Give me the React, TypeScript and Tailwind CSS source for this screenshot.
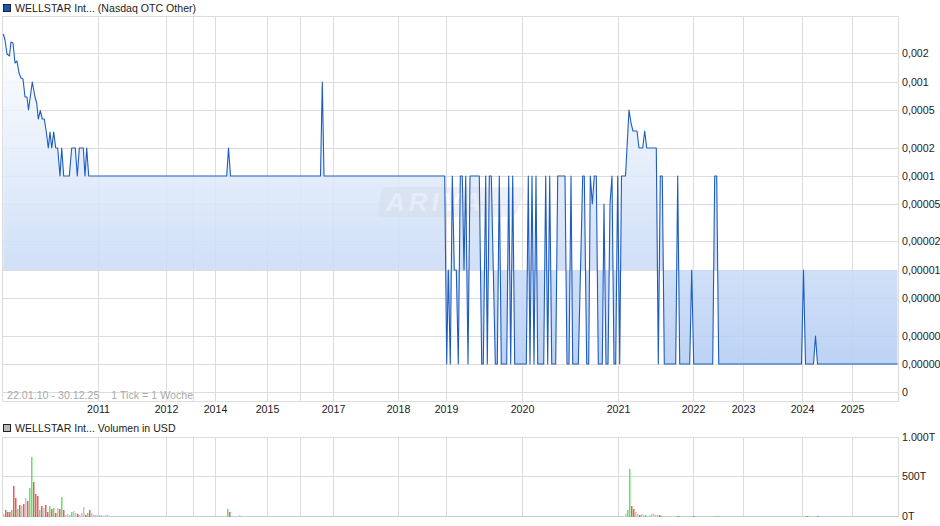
const T = 176;
const M = 270;
const H = 204;
const B = 364;

// price line in page pixels
const points: [number, number][] = [
  [3.3, 34], [5, 40], [7, 54], [9.5, 56], [11, 42], [13, 43], [15, 63], [17, 61], [19, 73], [21, 78], [23, 79],
  [25, 97], [27, 97], [28.5, 110], [32.3, 82], [35, 97], [36.7, 103], [38.3, 119], [40.3, 110.6], [42.3, 119],
  [44.3, 119], [46.3, 132], [48.3, 148], [50, 132], [51.7, 148], [53.7, 132], [55.7, 148], [57.7, 148], [60, T],
  [61.7, 148], [63.7, T], [69.3, T], [71.7, 148], [75.3, 148], [77.3, T], [79.3, 148], [83.3, 148], [85, T],
  [86.7, 148], [88.7, T], [226.7, T], [228.5, 148], [230.5, T], [320.5, T], [322.3, 82], [324, T], [444.7, T],
  [446.7, B], [448.3, M], [450.3, B], [452.3, T], [454.3, M], [456.3, M], [458.3, B], [460.3, T], [462.3, T],
  [464, M], [465.7, T], [468, B], [470, T], [479.3, T], [481.7, B], [483.3, B], [485.7, T], [487.3, B], [489.3, T],
  [491.3, T], [495.3, B], [497.3, B], [499.3, T], [501.3, B], [506.7, B], [508.7, T], [510.7, B], [512.7, T],
  [514.7, B], [526.3, B], [528.3, T], [530, B], [532, T], [534, B], [536, T], [537.7, B], [543.7, B], [545.7, T],
  [547.7, B], [549.7, T], [551.7, B], [555.7, B], [557.7, T], [565, T], [567, B], [569, B], [571, T], [572.7, B],
  [578.3, B], [582.7, T], [584.3, T], [586.7, B], [588.7, B], [590.3, T], [592.3, H], [594.3, T], [596.3, T],
  [598.3, B], [602.3, B], [604, H], [606, B], [608, B], [610, H], [612, T], [614, B], [615.7, B], [617.7, T],
  [619.7, B], [621.5, T], [625.5, T], [629, 110], [631, 123], [633, 131], [637, 131], [639, 148], [642.7, 148],
  [644.7, 131], [646.7, 148], [656.3, 148], [658.3, B], [660.3, T], [662.3, T], [664.3, B], [675.7, B], [677.7, T],
  [679.7, B], [689.7, B], [691.7, M], [693.7, B], [712.7, B], [714.7, T], [716.7, T], [718.7, B], [801.5, B],
  [803.5, M], [805.5, B], [813.5, B], [815.5, 336], [817.5, B], [897.5, B],
];

const line = points.map((p) => p.join(",")).join(" ");
const area = `${line} 897.5,${M} 3.3,${M}`;

const gridX = [98, 166, 193, 215, 267, 300, 333, 398, 446, 522, 618, 693, 743, 802, 852];
const gridY = [53, 82, 110, 148, 176, 204, 241, 270, 298, 336, 364, 392];
const priceLabels = ["0,002", "0,001", "0,0005", "0,0002", "0,0001", "0,00005", "0,00002", "0,00001", "0,00000", "0,00000", "0,00000", "0"];
const years: [string, number][] = [
  ["2011", 98], ["2012", 166], ["2014", 215], ["2015", 267], ["2017", 333], ["2018", 398], ["2019", 446],
  ["2020", 522], ["2021", 618], ["2022", 693], ["2023", 743], ["2024", 802], ["2025", 852],
];

const GREEN = "#66e066";
const RED = "#e06060";
const GRAY = "#c4c4c4";

// first weeks of the volume chart, one bar every 2px
const firstBars: [number, string][] = [
  [3, GRAY], [7, RED], [5, RED], [5, RED], [7, GREEN], [31, RED], [19, RED], [8, GREEN], [12, RED], [11, GRAY],
  [13, RED], [19, GRAY], [16, RED], [29, GREEN], [60, GREEN], [35, RED], [23, RED], [21, RED], [7, GREEN], [11, RED],
  [9, GRAY], [12, RED], [5, RED], [11, GREEN], [8, RED], [9, GREEN], [4, RED], [9, GRAY], [8, RED], [20, GREEN],
  [7, RED], [2, GRAY], [3, GRAY], [2, GRAY], [5, GREEN], [6, GRAY], [4, GRAY], [3, RED], [2, GRAY], [4, GRAY],
  [10, GRAY], [2, RED], [4, GREEN], [7, RED], [4, GRAY], [2, GRAY], [2, GRAY], [2, GRAY], [2, GRAY], [2, GRAY],
  [1, GRAY], [2, GRAY], [2, GRAY], [1, GRAY],
];

// bars that stand out later on, by page x
const laterBars: Record<number, [number, string]> = {
  227: [8, GREEN], 229: [5, RED], 239: [2, GRAY],
  625: [3, GRAY], 627: [7, GREEN], 629: [48, GREEN], 631: [11, RED], 633: [8, RED], 635: [5, GRAY],
  637: [3, GRAY], 639: [2, RED], 641: [3, GRAY], 643: [2, GRAY], 645: [2, GREEN], 647: [1, GRAY],
  649: [2, GRAY], 651: [3, GRAY], 653: [3, GRAY], 655: [2, GRAY], 657: [2, GRAY], 659: [2, RED],
  661: [1, GREEN], 677: [1, RED], 679: [1, GREEN], 693: [1, RED], 715: [1, GREEN], 717: [1, GREEN],
  805: [1, GREEN], 807: [1, RED], 817: [1, RED],
};

const bars: { x: number; h: number; color: string }[] = [];
for (let i = 0; 3 + i * 2 < 897; i++) {
  const x = 3 + i * 2;
  const [h, color] = firstBars[i] ?? laterBars[x] ?? [1, GRAY];
  bars.push({ x, h, color });
}

function Legend({ swatch, children }: { swatch: string; children: string }) {
  return (
    <div className="flex h-4 items-center gap-1 pl-[3px] text-[10.6px] leading-none text-[#222222]">
      <span className={`h-2 w-2 border border-[#222222] ${swatch}`} />
      <span className="whitespace-pre">{children}</span>
    </div>
  );
}

export default function App() {
  return (
    <div className="flex h-[526px] w-[940px] flex-col overflow-hidden bg-white font-['Liberation_Sans',Arial,sans-serif]">
      <Legend swatch="bg-[#1a56b8]">WELLSTAR Int... (Nasdaq OTC Other)</Legend>

      <svg width={940} height={404} viewBox="0 16 940 404" className="block shrink-0">
        <defs>
          <linearGradient id="priceFill" gradientUnits="userSpaceOnUse" x1="0" y1="34" x2="0" y2="364">
            <stop offset="0" stopColor="#ffffff" />
            <stop offset="1" stopColor="#b4cdf3" />
          </linearGradient>
        </defs>

        {gridX.map((x) => (
          <line key={x} x1={x + 0.5} x2={x + 0.5} y1={16} y2={402} stroke="#dcdcdc" />
        ))}
        {gridY.map((y) => (
          <line key={y} x1={2} x2={898} y1={y + 0.5} y2={y + 0.5} stroke="#dcdcdc" />
        ))}
        <rect x={2.5} y={16.5} width={896} height={385} fill="none" stroke="#dcdcdc" />

        <polygon points={area} fill="url(#priceFill)" fillOpacity={0.88} />

        <g opacity={0.38}>
          <path d="M388 187 H520 Q526 187 524 192 L517 212 Q515 217 509 217 H382 Q376 217 378 212 L381 192 Q382 187 388 187 Z" fill="#d3dae6" />
          <text x={386} y={211} fontSize={26} fontWeight={700} fontStyle="italic" letterSpacing={4} fill="#f2f5fb">
            ARIVA
          </text>
        </g>

        <polyline points={line} fill="none" stroke="#1f5cc0" strokeWidth={1.1} strokeLinejoin="round" />

        <text x={7} y={399} fontSize={10.67} fill="#aaaaaa">
          22.01.10 - 30.12.25
        </text>
        <text x={111.3} y={399} fontSize={10.67} fill="#aaaaaa">
          1 Tick = 1 Woche
        </text>

        {priceLabels.map((label, i) => (
          <text key={i} x={902} y={gridY[i] + 4} fontSize={10.67} fill="#222222">
            {label}
          </text>
        ))}
        {years.map(([year, x]) => (
          <text key={year} x={x + 0.5} y={413} fontSize={10.67} fill="#222222" textAnchor="middle">
            {year}
          </text>
        ))}
      </svg>

      <Legend swatch="bg-[#bbbbbb]">WELLSTAR Int... Volumen in USD</Legend>

      <svg width={940} height={90} viewBox="0 436 940 90" className="block shrink-0 overflow-visible">
        {gridX.map((x) => (
          <line key={x} x1={x + 0.5} x2={x + 0.5} y1={437} y2={517} stroke="#dcdcdc" />
        ))}
        <line x1={2} x2={898} y1={476.5} y2={476.5} stroke="#dcdcdc" />
        <rect x={2.5} y={437.5} width={896} height={79} fill="none" stroke="#dcdcdc" />

        {bars.map((b) => (
          <rect key={b.x} x={b.x} y={517 - b.h} width={1.5} height={b.h} fill={b.color} />
        ))}

        <text x={902} y={441} fontSize={10.67} fill="#222222">1.000T</text>
        <text x={902} y={480} fontSize={10.67} fill="#222222">500T</text>
        <text x={902} y={520} fontSize={10.67} fill="#222222">0T</text>
      </svg>
    </div>
  );
}
